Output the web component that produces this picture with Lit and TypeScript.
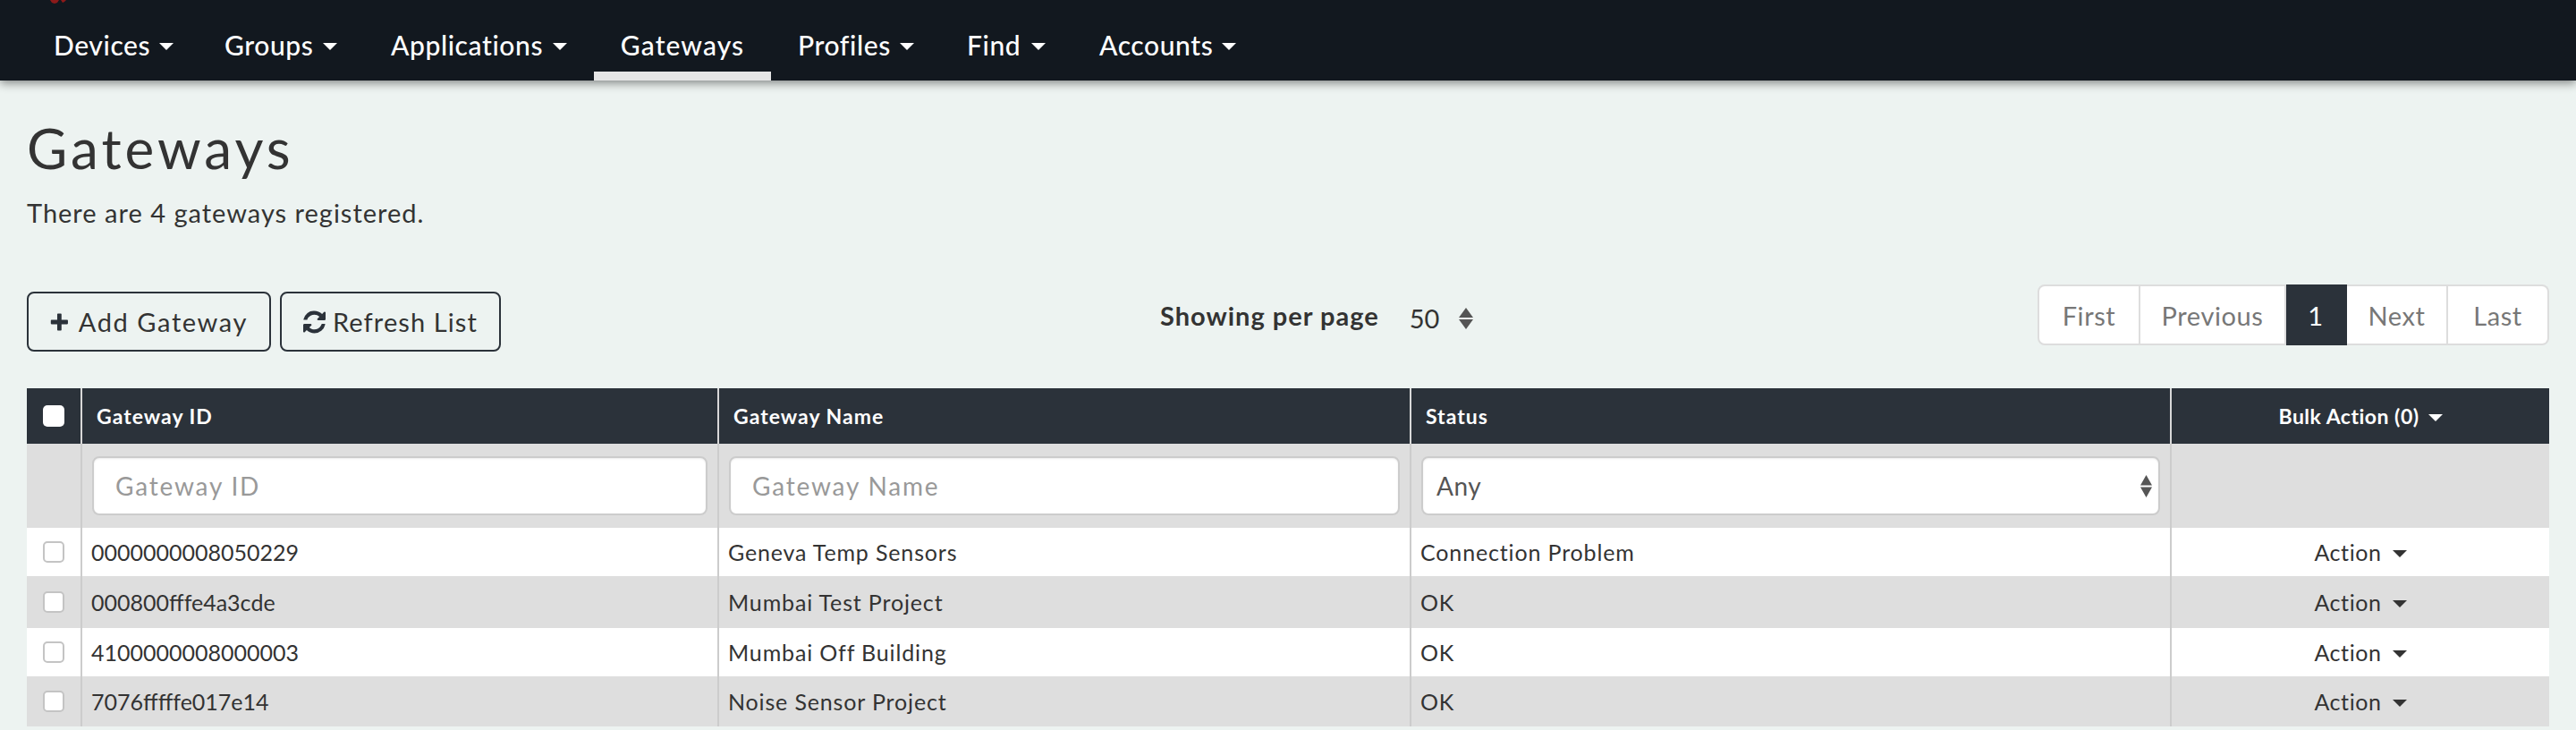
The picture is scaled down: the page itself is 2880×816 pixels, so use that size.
import { LitElement, html, css } from 'lit';
import { customElement } from 'lit/decorators.js';

const NAV = [
  { label: 'Devices', width: 191, caret: true },
  { label: 'Groups', width: 186, caret: true },
  { label: 'Applications', width: 257, caret: true },
  { label: 'Gateways', width: 198, caret: false, active: true },
  { label: 'Profiles', width: 189, caret: true },
  { label: 'Find', width: 148, caret: true },
  { label: 'Accounts', width: 213, caret: true },
];

const PAGES = [
  { label: 'First', width: 115 },
  { label: 'Previous', width: 163 },
  { label: '1', width: 68, current: true },
  { label: 'Next', width: 113 },
  { label: 'Last', width: 113 },
];

const ROWS = [
  ['0000000008050229', 'Geneva Temp Sensors', 'Connection Problem'],
  ['000800fffe4a3cde', 'Mumbai Test Project', 'OK'],
  ['4100000008000003', 'Mumbai Off Building', 'OK'],
  ['7076fffffe017e14', 'Noise Sensor Project', 'OK'],
];

@customElement('app-root')
export class AppRoot extends LitElement {
  static styles = css`
    :host {
      display: block;
      height: 816px;
      overflow: hidden;
      background: #edf3f1;
      color: #333;
      font-family: Lato, 'Open Sans', sans-serif;
    }
    * { box-sizing: border-box; }

    .navbar {
      position: relative;
      height: 90px;
      padding-left: 30px;
      display: flex;
      background: #12181f;
      box-shadow: 0 3px 10px rgba(0, 0, 0, 0.45);
    }
    .logo-bit { position: absolute; left: 56px; top: 0; }
    .nav-item {
      height: 90px;
      padding: 10px 30px 0;
      display: flex;
      align-items: center;
      justify-content: space-between;
      color: #fff;
      font-size: 30px;
      font-weight: 500;
      letter-spacing: 0.6px;
      white-space: nowrap;
    }
    .nav-item.active {
      justify-content: center;
      letter-spacing: 1.1px;
      box-shadow: inset 0 -10px 0 #e5e5e5;
    }
    .caret {
      flex: none;
      display: inline-block;
      margin-left: 10px;
      margin-top: 3px;
      border-left: 8px solid transparent;
      border-right: 8px solid transparent;
      border-top: 8px solid currentColor;
    }

    .content { padding: 0 30px; }
    h1 {
      margin: 0;
      padding-top: 37px;
      font-size: 62px;
      line-height: 76px;
      font-weight: 400;
      letter-spacing: 4px;
    }
    .intro { margin: 15px 0 0; font-size: 29px; line-height: 40px; letter-spacing: 1px; }

    .toolbar {
      height: 68px;
      margin-top: 60px;
      display: grid;
      grid-template-columns: 1fr 1fr 1fr;
    }
    .buttons { display: flex; gap: 10px; padding-top: 8px; }
    .btn {
      height: 67px;
      padding: 0 24px;
      display: flex;
      align-items: center;
      border: 2px solid #2b323a;
      border-radius: 8px;
      font-size: 29px;
      color: #333;
      white-space: nowrap;
    }
    .btn.add { width: 273px; gap: 11px; letter-spacing: 1.6px; }
    .btn.refresh { width: 247px; gap: 8px; letter-spacing: 1.1px; }
    .per-page {
      display: flex;
      align-items: center;
      padding-left: 327px;
      white-space: nowrap;
      font-size: 29px;
    }
    .per-page b { font-weight: 700; letter-spacing: 1px; margin-bottom: 6px; }
    .per-page .value { margin-left: 34px; }
    .per-page svg { margin-left: 22px; }

    .pager {
      justify-self: end;
      display: flex;
      height: 68px;
      font-size: 29px;
      letter-spacing: 0.6px;
      color: #777;
    }
    .page {
      display: flex;
      align-items: center;
      justify-content: center;
      background: #fff;
      border: 2px solid #ddd;
      border-left: none;
    }
    .page:first-child { border-left: 2px solid #ddd; border-radius: 8px 0 0 8px; }
    .page:last-child { border-radius: 0 8px 8px 0; }
    .page.current { background: #2b323a; border-color: #2b323a; color: #fff; }

    .table {
      margin-top: 48px;
      display: grid;
      grid-template-columns: 62px 712px 774px 850px 422px;
      grid-template-rows: 62px 94px 54px 58px 54px 56px;
      font-size: 25px;
      color: #333;
    }
    .cell {
      display: flex;
      align-items: center;
      padding: 0 11px 0 10px;
      border-right: 2px solid #ccc;
      white-space: nowrap;
    }
    .cell.wide { letter-spacing: 0.85px; }
    .cell:nth-child(5n) { border-right: none; }
    .head {
      background: #2b323a;
      color: #fff;
      font-size: 23px;
      font-weight: 700;
      letter-spacing: 1px;
      padding-left: 16px;
    }
    .head:nth-child(n) { border-right-color: #d8d8d8; }
    .head.end { letter-spacing: 0.5px; }
    .filter { background: #dedede; padding-left: 11px; }
    .odd { background: #fff; }
    .even { background: #dedede; }
    .check { justify-content: center; padding: 0; }
    .end { justify-content: center; padding: 0; }

    .box {
      width: 24px;
      height: 24px;
      border: 2px solid #c4c4c4;
      border-radius: 5px;
      background: #fff;
    }
    .head .box { border: none; }

    .input {
      width: 100%;
      height: 66px;
      padding: 0 24px;
      display: flex;
      align-items: center;
      justify-content: space-between;
      background: #fff;
      border: 2px solid #ccc;
      border-radius: 8px;
      box-shadow: inset 0 1px 2px rgba(0, 0, 0, 0.08);
      font-size: 28px;
      letter-spacing: 1.8px;
    }
    .input.ph { color: #999; }
    .input.select { padding: 0 7px 0 15px; color: #555; letter-spacing: 0.6px; }
    .action { letter-spacing: 0.6px; }
    .action .caret { margin-left: 12px; border-top-color: #333; }
  `;

  private updown(w: number, h: number) {
    return html`<svg width=${w} height=${h} viewBox="0 0 14 24" fill="#555" preserveAspectRatio="none">
      <path d="M7 0l7 11H0zM0 13h14L7 24z"></path>
    </svg>`;
  }

  render() {
    return html`
      <nav class="navbar">
        <svg class="logo-bit" width="18" height="4" viewBox="0 0 18 4" fill="#8c1a1a">
          <path d="M0 0h10l-2 3-3 1-3-1zM12 0h6l-2 2-2 1z"></path>
        </svg>
        ${NAV.map(
          (n) => html`<div class="nav-item ${n.active ? 'active' : ''}" style="width:${n.width}px">
            <span>${n.label}</span>${n.caret ? html`<span class="caret"></span>` : ''}
          </div>`,
        )}
      </nav>

      <main class="content">
        <h1>Gateways</h1>
        <p class="intro">There are 4 gateways registered.</p>

        <div class="toolbar">
          <div class="buttons">
            <div class="btn add">
              <svg width="26" height="26" viewBox="0 0 26 26" fill="#2b323a">
                <path d="M10 2a1 1 0 0 1 1-1h4a1 1 0 0 1 1 1v8h8a1 1 0 0 1 1 1v4a1 1 0 0 1-1 1h-8v8a1 1 0 0 1-1 1h-4a1 1 0 0 1-1-1v-8H2a1 1 0 0 1-1-1v-4a1 1 0 0 1 1-1h8z"></path>
              </svg>
              Add Gateway
            </div>
            <div class="btn refresh">
              <svg width="26" height="26" viewBox="0 0 1536 1536" fill="#2b323a">
                <path d="M1511 928q0 5-1 7-64 268-268 434.500T764 1536q-146 0-282.500-55T238 1324l-129 129q-19 19-45 19t-45-19-19-45V960q0-26 19-45t45-19h448q26 0 45 19t19 45-19 45L420 1142q71 66 161 102t187 36q134 0 250-65t186-179q11-17 53-117 8-23 30-23h192q13 0 22.500 9.500T1511 928zM1536 128v448q0 26-19 45t-45 19h-448q-26 0-45-19t-19-45 19-45l138-138q-148-137-349-137-134 0-250 65T332 480q-11 17-53 117-8 23-30 23H50q-13 0-22.500-9.500T18 588v-7q65-268 270-434.500T768 0q146 0 284 55.500T1297 212l130-129q19-19 45-19t45 19 19 45z"></path>
              </svg>
              Refresh List
            </div>
          </div>
          <div class="per-page">
            <b>Showing per page</b>
            <span class="value">50</span>
            ${this.updown(16, 24)}
          </div>
          <div class="pager">
            ${PAGES.map(
              (p) => html`<div class="page ${p.current ? 'current' : ''}" style="width:${p.width}px">${p.label}</div>`,
            )}
          </div>
        </div>

        <div class="table">
          <div class="cell head check"><span class="box"></span></div>
          <div class="cell head">Gateway ID</div>
          <div class="cell head">Gateway Name</div>
          <div class="cell head">Status</div>
          <div class="cell head end">Bulk Action (0)<span class="caret"></span></div>

          <div class="cell filter"></div>
          <div class="cell filter"><div class="input ph">Gateway ID</div></div>
          <div class="cell filter"><div class="input ph">Gateway Name</div></div>
          <div class="cell filter">
            <div class="input select">Any ${this.updown(13, 25)}</div>
          </div>
          <div class="cell filter"></div>

          ${ROWS.map((r, i) => {
            const tone = i % 2 ? 'even' : 'odd';
            return html`
              <div class="cell check ${tone}"><span class="box"></span></div>
              <div class="cell ${tone}">${r[0]}</div>
              <div class="cell wide ${tone}">${r[1]}</div>
              <div class="cell wide ${tone}">${r[2]}</div>
              <div class="cell end action ${tone}">Action<span class="caret"></span></div>
            `;
          })}
        </div>
      </main>
    `;
  }
}
